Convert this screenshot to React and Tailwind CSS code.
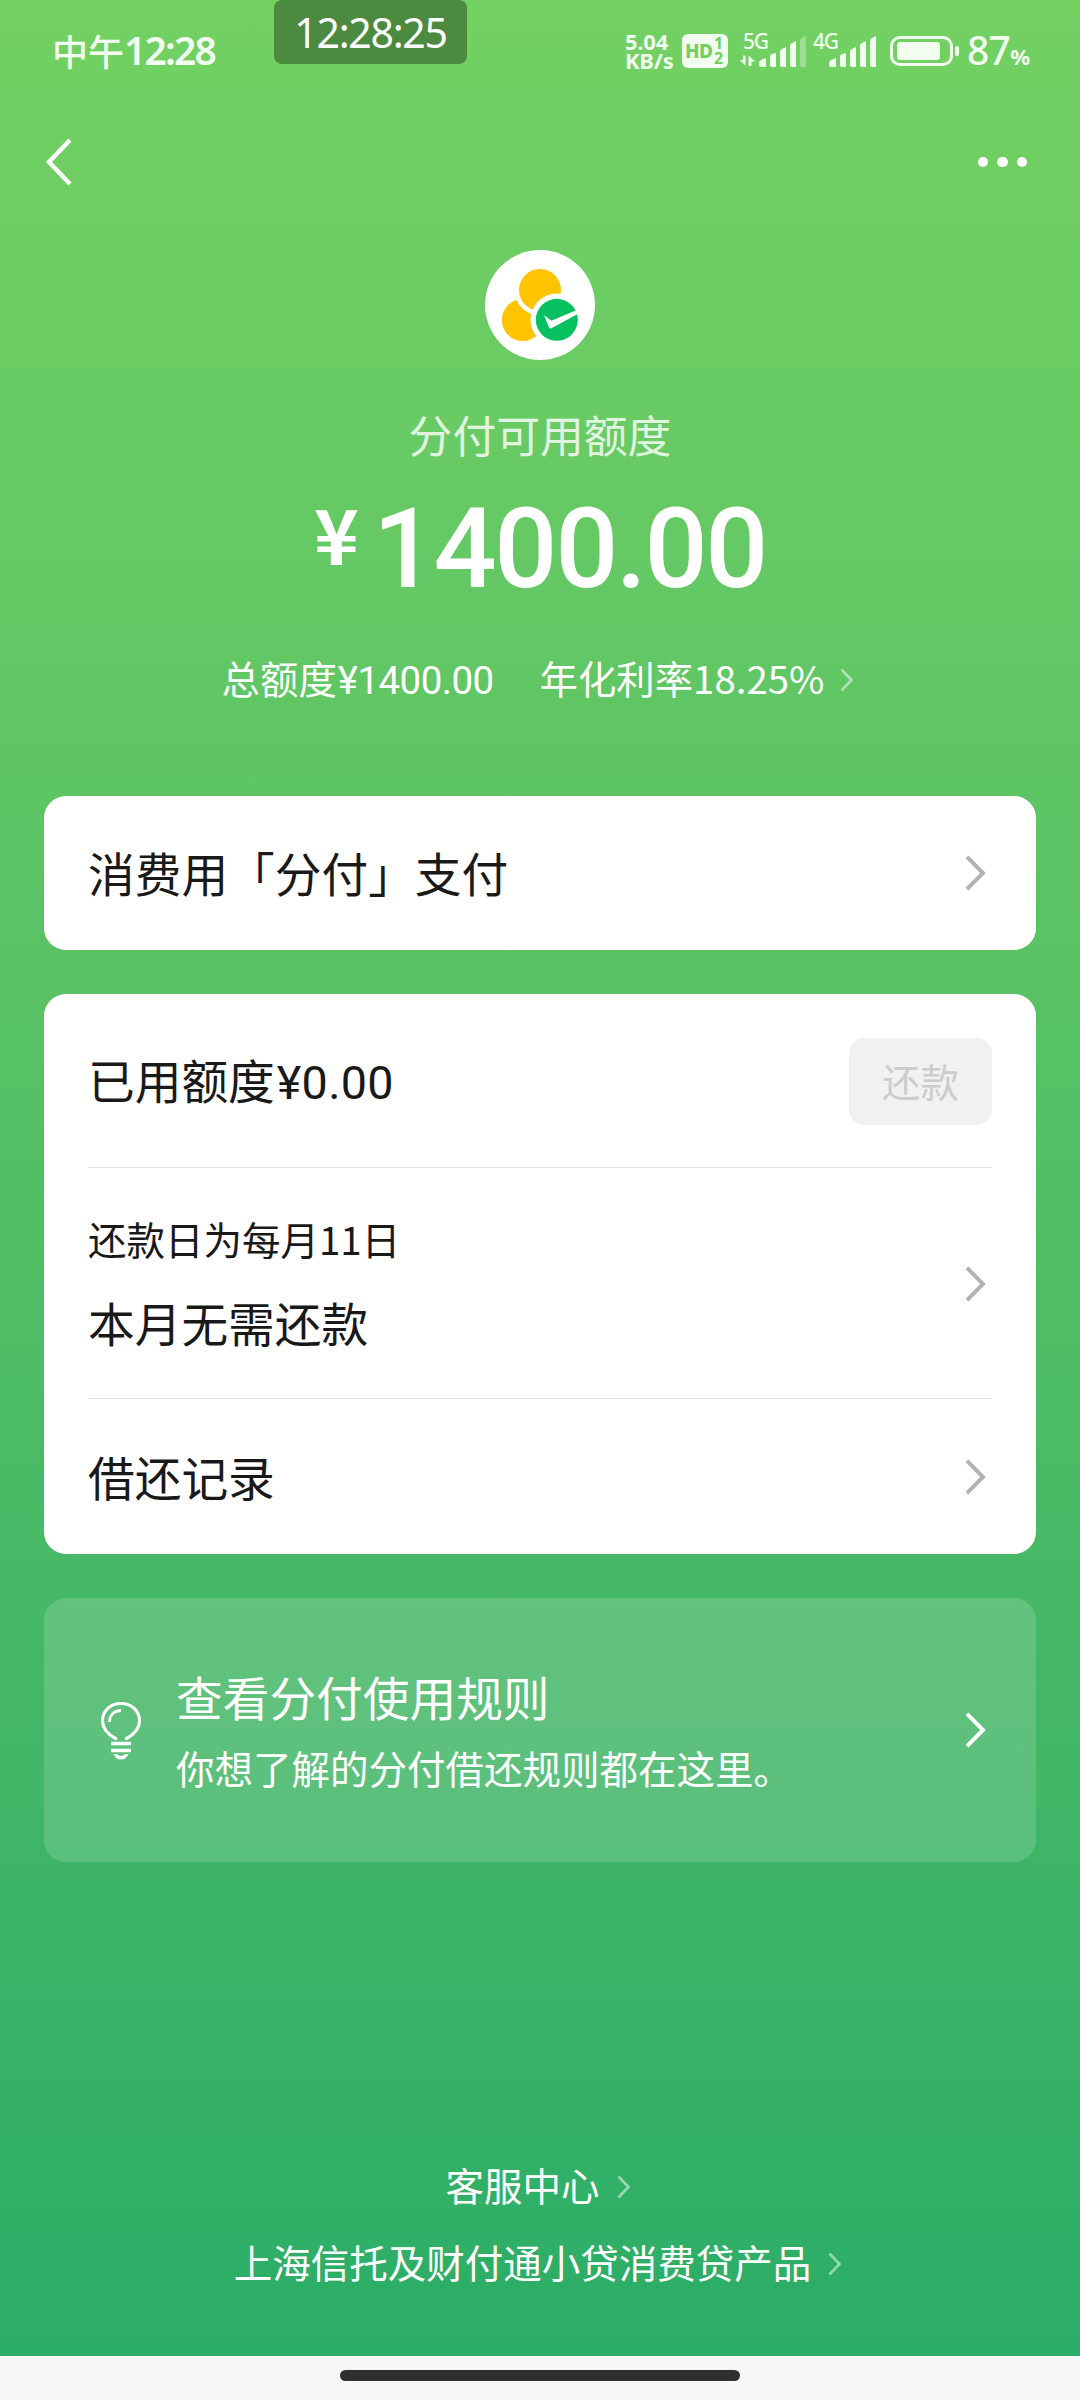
import React from 'react';

const Chevron = ({ className = '', size = 'md' }) => {
    if (size === 'sm') {
        return (
            <svg className={className} width="18" height="26" viewBox="0 0 18 26" fill="none">
                <path d="M1.5 2.5L11.5 13L1.5 23.5" stroke="currentColor" strokeWidth="2.6" />
            </svg>
        );
    }
    return (
        <svg className={className} width="27" height="40" viewBox="0 0 27 40" fill="none">
            <path d="M2 3.8L18 20L2 36.2" stroke="currentColor" strokeWidth="4" />
        </svg>
    );
};

const SignalBars = ({ label, lastFaded, arrows }) => (
    <svg width="70" height="52" viewBox="0 -8 70 52" fill="currentColor">
        <text x="3" y="16" fontSize="21" fontWeight="500" fontFamily="Noto Sans, sans-serif" textLength="26">{label}</text>
        {arrows && (
            <path d="M5.5 22.5V32.5L0 27H3V22.5ZM8.5 33V22.5L15 28.5H11.5V33Z" />
        )}
        <path d="M19 32V30Q19 28 21 27L26 25V34H21Q19 34 19 32Z" />
        <path d="M30 32V24Q30 22 32 21L36 20V34H32Q30 34 30 32Z" />
        <path d="M40 32V19Q40 17 42 16L46 14V34H42Q40 34 40 32Z" />
        <path d="M50 32V13Q50 11 52 10L56 8V34H52Q50 34 50 32Z" />
        <path d="M60 32V8Q60 6 62 5L66 3V34H62Q60 34 60 32Z" opacity={lastFaded ? 0.35 : 1} />
    </svg>
);

const StatusBar = () => (
    <div className="relative flex h-[102px] items-center justify-between pl-[52px] pr-[50px] text-[#f1fdee]">
        <div className="flex items-center pb-[2px] leading-[50px]">
            <span className="font-['Noto_Sans_CJK_SC',sans-serif] text-[36px] font-medium">中午</span>
            <span className="font-['Noto_Sans',sans-serif] text-[39px] font-semibold tracking-[-1.8px]">12:28</span>
        </div>
        <div className="absolute left-[274px] top-0 flex h-[64px] w-[193px] items-center justify-center rounded-lg bg-[#4b8a3f] pt-[2px] font-['Noto_Sans',sans-serif] text-[41px] tracking-[-1.3px] text-white">
            12:28:25
        </div>
        <div className="flex items-center">
            <div className="flex w-[49px] flex-col font-['Noto_Sans',sans-serif] text-[22px] font-bold leading-[19px] tracking-[-0.2px]">
                <span>5.04</span>
                <span>KB/s</span>
            </div>
            <div className="ml-[8px] flex h-[34px] w-[46px] items-center rounded-md bg-[#f1fdee] pl-[3px] font-['Noto_Sans',sans-serif] text-[#6fcf60]">
                <span className="w-[29px] text-[19px] font-extrabold leading-none tracking-[-0.5px]">HD</span>
                <span className="flex flex-col text-[16px] font-bold leading-[15px]">
                    <span>1</span>
                    <span>2</span>
                </span>
            </div>
            <div className="ml-[12px] flex">
                <SignalBars label="5G" lastFaded arrows />
                <SignalBars label="4G" />
            </div>
            <svg className="ml-[10px]" width="70" height="30" viewBox="0 0 70 30" fill="none">
                <rect x="1.5" y="1.5" width="60" height="27" rx="8.5" stroke="currentColor" strokeWidth="3" />
                <rect x="7" y="6" width="43" height="18" rx="3" fill="currentColor" />
                <rect x="65" y="10" width="4" height="10" rx="2" fill="currentColor" />
            </svg>
            <div className="ml-[7px] flex items-baseline pt-[4px] font-['Noto_Sans',sans-serif] font-medium leading-[50px]">
                <span className="text-[39px] tracking-[-0.7px]">87</span>
                <span className="text-[22px] font-bold">%</span>
            </div>
        </div>
    </div>
);

const NavBar = () => (
    <div className="flex h-[120px] items-center justify-between pl-[44px] pr-[53px] text-white">
        <svg width="30" height="50" viewBox="0 0 30 50" fill="none">
            <path d="M26 3L5 25L26 47" stroke="currentColor" strokeWidth="4.4" />
        </svg>
        <div className="flex gap-[9px]">
            <span className="size-[10.4px] rounded-full bg-white" />
            <span className="size-[10.4px] rounded-full bg-white" />
            <span className="size-[10.4px] rounded-full bg-white" />
        </div>
    </div>
);

const Logo = () => (
    <svg width="110" height="110" viewBox="0 0 110 110">
        <circle cx="55" cy="55" r="55" fill="#fff" />
        <circle cx="37.8" cy="70" r="21" fill="#ffc300" />
        <circle cx="55" cy="40" r="25.5" fill="#fff" />
        <circle cx="55" cy="40" r="21" fill="#ffc300" />
        <circle cx="71.8" cy="69.8" r="26.3" fill="#fff" />
        <circle cx="71.8" cy="69.8" r="21" fill="#07c160" />
        <path d="M59.3 66Q60 65.6 61 66.4L66.3 70.8L90.6 60.6L93.5 63.6L66.5 78.2Q64.8 79 64 77.5Z" fill="#fff" />
    </svg>
);

const BulbIcon = () => (
    <svg width="44" height="60" viewBox="0 0 44 60" fill="none" stroke="currentColor">
        <path d="M16.5 40V38.5C8.5 34 3.5 29 3.5 21C3.5 10.8 11.5 3.5 22 3.5S40.5 10.8 40.5 21C40.5 29 35.5 34 27.5 38.5V40" strokeWidth="3.2" />
        <path d="M10.5 22C10.5 15 15 10.5 22 10.5" strokeWidth="2.8" />
        <path d="M12 43.5H32M12 50.5H32" strokeWidth="3.4" />
        <path d="M14.5 54H18Q20 56 22 56T26 54H29.5Q27.5 59.5 22 59.5T14.5 54Z" fill="currentColor" stroke="none" />
    </svg>
);

const FooterLink = ({ children }) => (
    <a className="flex h-[60px] items-center justify-center">
        {children}
        <Chevron size="sm" className="ml-[17px] mt-[4px] text-white/50" />
    </a>
);

const App = () => {
    return (
        <div className="flex h-[2400px] w-[1080px] flex-col overflow-hidden bg-[#f7f7f7] font-['Noto_Sans_CJK_SC',sans-serif]">
            <div className="flex h-[2356px] flex-col bg-linear-to-b from-[#73d162] to-[#2aad67]">
                <StatusBar />
                <NavBar />

                {/* Available credit */}
                <div className="flex flex-col items-center pt-[28px] text-white">
                    <Logo />
                    <div className="mt-[44px] text-[43.8px] leading-[60px] text-white/80">分付可用额度</div>
                    <div className="mt-[25px] flex h-[120px] items-start">
                        <span className="text-[76px] font-bold leading-[86px]">¥</span>
                        <span className="ml-[14px] font-['Roboto',sans-serif] text-[111px] font-medium leading-[120px] tracking-[-2.3px]">1400.00</span>
                    </div>
                    <div className="mt-[40px] flex h-[60px] items-center text-[38.4px] leading-[60px]">
                        <div className="flex items-baseline">
                            <span>总额度</span>
                            <span className="ml-px font-['Roboto',sans-serif] tracking-[-0.5px]">¥1400.00</span>
                            <span className="ml-[46px]">年化利率18.25%</span>
                        </div>
                        <Chevron size="sm" className="ml-[16px] mt-[2px] text-white/50" />
                    </div>
                </div>

                <div className="mt-[87px] flex flex-col gap-[44px] px-[44px] text-[46.7px] text-[#191919]">
                    <div className="flex h-[154px] items-center justify-between rounded-[22px] bg-white px-[44px]">
                        <span className="pb-[2px]">消费用「分付」支付</span>
                        <Chevron className="text-[#b2b2b2]" />
                    </div>

                    <div className="flex h-[560px] flex-col rounded-[22px] bg-white px-[44px]">
                        <div className="flex h-[174px] items-center justify-between border-b border-[#e0e0e0] pt-px">
                            <div className="flex items-baseline">
                                <span>已用额度</span>
                                <span className="ml-[2px] font-['Roboto',sans-serif] tracking-[0.3px]">¥0.00</span>
                            </div>
                            <button className="h-[87px] w-[143px] rounded-[15px] bg-[#f1f1f1] text-[38.4px] text-[#cccccc]">还款</button>
                        </div>
                        <div className="flex h-[231px] items-center justify-between border-b border-[#e0e0e0] pt-px">
                            <div className="flex flex-col">
                                <span className="text-[38.5px] leading-[70px]">还款日为每月11日</span>
                                <span className="mt-[7px] leading-[84px]">本月无需还款</span>
                            </div>
                            <Chevron className="text-[#b2b2b2]" />
                        </div>
                        <div className="flex flex-1 items-center justify-between">
                            <span className="pb-px">借还记录</span>
                            <Chevron className="text-[#b2b2b2]" />
                        </div>
                    </div>

                    <div className="flex h-[264px] items-center rounded-[22px] bg-white/15 px-[44px] text-white">
                        <span className="ml-[11px]">
                            <BulbIcon />
                        </span>
                        <div className="ml-[33px] flex flex-1 flex-col pb-[3px]">
                            <span className="leading-[76px]">查看分付使用规则</span>
                            <span className="text-[38.5px] leading-[66px]">你想了解的分付借还规则都在这里。</span>
                        </div>
                        <Chevron />
                    </div>
                </div>

                <div className="mt-auto flex flex-col gap-[17px] pb-[64px] text-[38.5px] text-white">
                    <FooterLink>客服中心</FooterLink>
                    <FooterLink>上海信托及财付通小贷消费贷产品</FooterLink>
                </div>
            </div>

            {/* Home indicator */}
            <div className="flex flex-1 justify-center pt-[14px]">
                <div className="h-[11px] w-[400px] rounded-full bg-[#2f2f2f]" />
            </div>
        </div>
    );
};

export default App;
